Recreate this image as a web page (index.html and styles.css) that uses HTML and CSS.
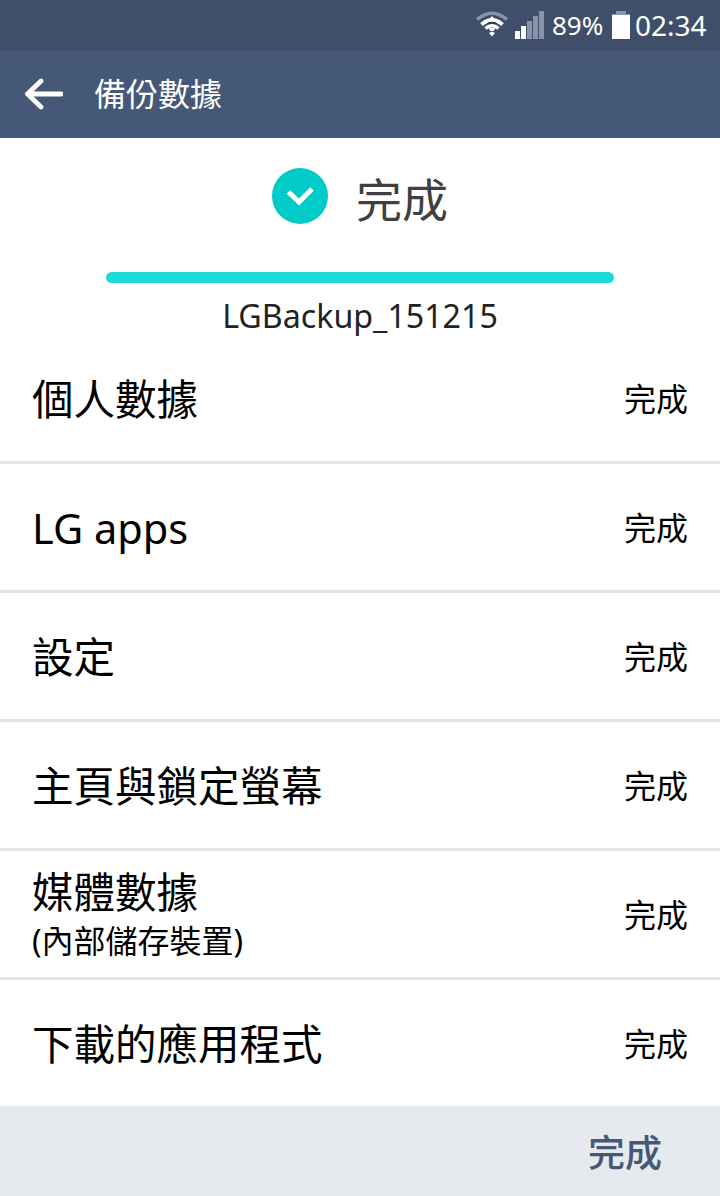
FILE: index.html
```html
<!DOCTYPE html>
<html lang="zh-Hant">

<head>
    <meta charset="UTF-8">
    <meta name="viewport" content="width=device-width, initial-scale=1.0">
    <title>備份數據</title>
    <link rel="stylesheet" href="styles.css">
</head>

<body>

    <div class="status-bar">
        <svg class="wifi" width="34" height="28" viewBox="0 0 34 28">
            <path d="M2 8.500 Q17 -4 32 8.500" fill="none" stroke="#8994aa" stroke-width="3.600"/>
            <path d="M6.500 13.500 Q17 4.500 27.500 13.500" fill="none" stroke="#fff" stroke-width="4"/>
            <path d="M17 5 L21 10 H13 Z" fill="#fff"/>
            <path d="M12.500 12.800 Q17 10.500 21.500 12.800" fill="none" stroke="#303946" stroke-width="1.600"/>
            <path d="M10.500 17.500 Q17 12 23.500 17.500" fill="none" stroke="#fff" stroke-width="3.600"/>
            <path d="M14 17 H20 L19 20 H15 Z" fill="#fff"/>
            <path d="M14 22 L17 20.500 L20 22 L17 25.500 Z" fill="#fff"/>
        </svg>
        <svg class="signal" width="29" height="28" viewBox="0 0 29 28">
            <path d="M0 20h5v8H0z M6 15h5v13H6z" fill="#fff"/>
            <path d="M12 10h5v18h-5z M18 5h5v23h-5z M24 0h5v28h-5z" fill="#8994aa"/>
        </svg>
        <span class="percent">89%</span>
        <svg class="battery" width="18" height="28" viewBox="0 0 18 28">
            <path d="M4 0h10v3h4v1H0V3h4z" fill="#8994aa"/>
            <path d="M0 4h18v24H0z" fill="#fff"/>
        </svg>
        <span class="clock">02:34</span>
    </div>

    <div class="header">
        <svg class="back" width="40" height="32" viewBox="0 0 40 32">
            <path d="M18 3 L4.500 16 L18 29 M4.500 16 H38" fill="none" stroke="#fff" stroke-width="4.800" stroke-linecap="round" stroke-linejoin="round"/>
        </svg>
        <h1>備份數據</h1>
    </div>

    <div class="summary">
        <div class="result">
            <svg width="56" height="56" viewBox="0 0 56 56">
                <circle cx="28" cy="28" r="28" fill="#00cbc8"/>
                <path d="M16.500 24 L27 34 L40 21" fill="none" stroke="#fff" stroke-width="5"/>
            </svg>
            <span>完成</span>
        </div>
        <div class="progress"></div>
        <p class="filename">LGBackup_151215</p>
    </div>

    <div class="list">
        <div class="item">
            <div class="name">個人數據</div>
            <div class="state">完成</div>
        </div>
        <div class="item">
            <div class="name latin">LG apps</div>
            <div class="state">完成</div>
        </div>
        <div class="item">
            <div class="name">設定</div>
            <div class="state">完成</div>
        </div>
        <div class="item">
            <div class="name">主頁與鎖定螢幕</div>
            <div class="state">完成</div>
        </div>
        <div class="item">
            <div class="name">媒體數據<small>(內部儲存裝置)</small></div>
            <div class="state">完成</div>
        </div>
        <div class="item">
            <div class="name">下載的應用程式</div>
            <div class="state">完成</div>
        </div>
    </div>

    <div class="footer">
        <button>完成</button>
    </div>

</body>

</html>
```
FILE: styles.css
```css
* {
    box-sizing: border-box;
}

body {
    margin: 0;
    width: 720px;
    height: 1196px;
    overflow: hidden;
    background-color: #fff;
    color: #000;
    font-family: "Noto Sans", "Noto Sans CJK TC", sans-serif;
}

.status-bar {
    display: flex;
    justify-content: flex-end;
    height: 50px;
    padding: 11px 14px 0 0;
    background-color: #3f4f6a;
    color: #fff;
    line-height: 29px;
}

.wifi {
    margin-right: 6px;
}

.percent {
    width: 51px;
    margin: 0 9px 0 8px;
    font-size: 26px;
}

.clock {
    width: 71px;
    margin-left: 5px;
    font-size: 28px;
}

/* Title bar */
.header {
    display: flex;
    align-items: center;
    height: 88px;
    padding-left: 23px;
    background-color: #465877;
    color: #fff;
}

.header h1 {
    margin: 0 0 4px 31px;
    font-family: "Noto Sans CJK TC", sans-serif;
    font-size: 32px;
    font-weight: 400;
    line-height: 44px;
}

/* Backup result */
.summary {
    height: 197px;
    padding-top: 30px;
}

.result {
    display: flex;
    align-items: center;
    justify-content: center;
    height: 56px;
    gap: 28px;
}

.result span {
    padding-top: 1px;
    font-family: "Noto Sans CJK TC", sans-serif;
    color: #404040;
    font-size: 46px;
    line-height: 56px;
}

.progress {
    width: 508px;
    height: 11px;
    margin: 48px auto 0;
    border-radius: 6px;
    background-color: #1cdbd7;
}

.filename {
    margin: 11px 0 0;
    text-align: center;
    color: #222;
    font-size: 32.200px;
    line-height: 44px;
}

/* Backup items */
.item {
    display: flex;
    align-items: center;
    justify-content: space-between;
    height: 129px;
    padding: 0 32px 2px;
    border-bottom: 3px solid #e4e4e4;
    font-family: "Noto Sans CJK TC", sans-serif;
}

.item:last-child {
    height: 126px;
    border-bottom: none;
}

.name {
    font-size: 41.500px;
    line-height: 54px;
}

.latin {
    padding-top: 3px;
    font-family: "Noto Sans", sans-serif;
}

.name small {
    display: block;
    padding-top: 1px;
    font-family: "Noto Sans", "Noto Sans CJK TC", sans-serif;
    font-size: 32px;
    line-height: 46px;
}

.state {
    font-size: 32px;
    line-height: 44px;
}

.footer {
    display: flex;
    align-items: center;
    justify-content: flex-end;
    height: 90px;
    padding-right: 58px;
    background-color: #e6eaee;
}

.footer button {
    padding: 0;
    border: none;
    background: none;
    color: #465877;
    font-family: "Noto Sans CJK TC", sans-serif;
    font-size: 37px;
    font-weight: 500;
    line-height: 54px;
}
```
